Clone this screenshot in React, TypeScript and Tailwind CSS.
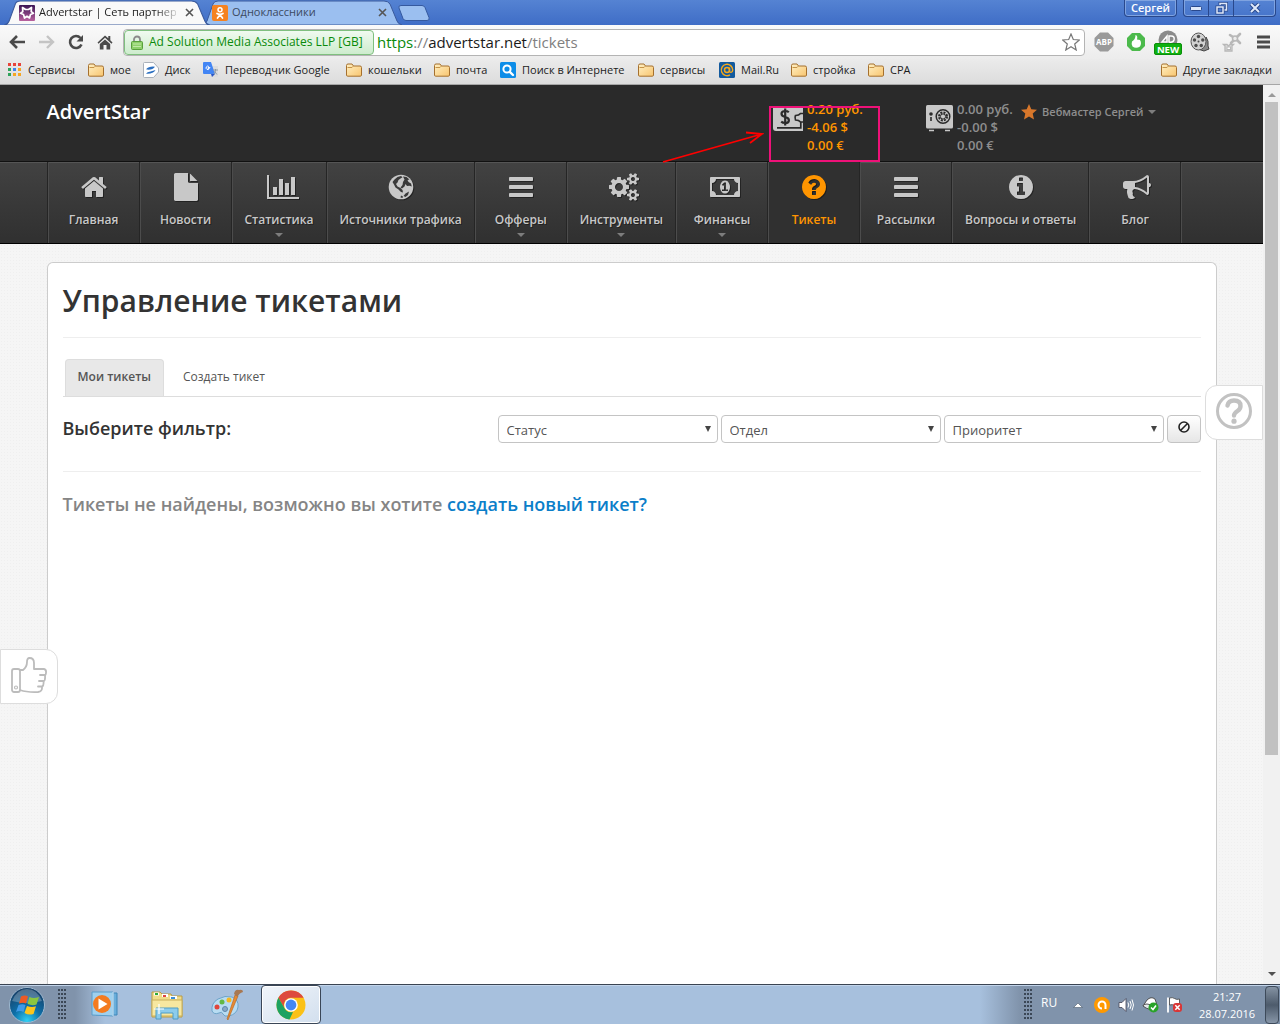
import React from 'react';

const CIRCLE =
  'm384 192q0 209-103 385.5t-279.5 279.5-385.5 103-385.5-103-279.5-279.5-103-385.5 103-385.5 279.500-279.500 385.500-103 385.500 103 279.500 279.500 103 385.500z';

const PATHS = {
  home: 'M1472 992v480q0 26-19 45t-45 19h-384v-384h-256v384h-384q-26 0-45-19t-19-45v-480q0-1 .5-3t.5-3l575-474 575 474q1 2 1 6zm223-69l-62 74q-8 9-21 11h-3q-13 0-21-7l-692-577-692 577q-12 8-24 7-13-2-21-11l-62-74q-8-10-7-23.500t11-21.500l719-599q32-26 76-26t76 26l244 204v-195q0-14 9-23t23-9h192q14 0 23 9t9 23v408l219 182q10 8 11 21.500t-7 23.500z',
  file: 'M1152 512v-472q22 14 36 28l408 408q14 14 28 36h-472zm-128 32q0 40 28 68t68 28h544v1056q0 40-28 68t-68 28h-1344q-40 0-68-28t-28-68v-1600q0-40 28-68t68-28h800v544z',
  chart: 'M640 896v512h-256v-512h256zm384-512v1024h-256v-1024h256zm1024 1152v128h-2048v-1536h128v1408h1920zm-640-896v768h-256v-768h256zm384-384v1152h-256v-1152h256z',
  bars: 'M1664 1344v128q0 26-19 45t-45 19h-1408q-26 0-45-19t-19-45v-128q0-26 19-45t45-19h1408q26 0 45 19t19 45zm0-512v128q0 26-19 45t-45 19h-1408q-26 0-45-19t-19-45v-128q0-26 19-45t45-19h1408q26 0 45 19t19 45zm0-512v128q0 26-19 45t-45 19h-1408q-26 0-45-19t-19-45v-128q0-26 19-45t45-19h1408q26 0 45 19t19 45z',
  cogs: 'M896 896q0-106-75-181t-181-75-181 75-75 181 75 181 181 75 181-75 75-181zm768 512q0-52-38-90t-90-38-90 38-38 90q0 53 37.500 90.500t90.500 37.500 90.500-37.500 37.500-90.500zm0-1024q0-52-38-90t-90-38-90 38-38 90q0 53 37.500 90.500t90.500 37.500 90.500-37.500 37.500-90.500zm-384 421v185q0 10-7 19.500t-16 10.500l-155 24q-11 35-32 76 34 48 90 115 7 11 7 20 0 12-7 19-23 30-82.500 89.500t-78.500 59.500q-11 0-21-7l-115-90q-37 19-77 31-11 108-23 155-7 24-30 24h-186q-11 0-20-7.500t-10-17.500l-23-153q-34-10-75-31l-118 89q-7 7-20 7-11 0-21-8-144-133-144-160 0-9 7-19 10-14 41-53t47-61q-23-44-35-82l-152-24q-10-1-17-9.500t-7-19.500v-185q0-10 7-19.500t16-10.500l155-24q11-35 32-76-34-48-90-115-7-11-7-20 0-12 7-20 22-30 82-89t79-59q11 0 21 7l115 90q34-18 77-32 11-108 23-154 7-24 30-24h186q11 0 20 7.500t10 17.500l23 153q34 10 75 31l118-89q8-7 20-7 11 0 21 8 144 133 144 160 0 8-7 19-12 16-42 54t-45 60q23 48 34 82l152 23q10 2 17 10.500t7 19.500zm640 533v140q0 16-149 31-12 27-30 52 51 113 51 138 0 4-4 7-122 71-124 71-8 0-46-47t-52-68q-20 2-30 2t-30-2q-14 21-52 68t-46 47q-2 0-124-71-4-3-4-7 0-25 51-138-18-25-30-52-149-15-149-31v-140q0-16 149-31 13-29 30-52-51-113-51-138 0-4 4-7 4-2 35-20t59-34 30-16q8 0 46 46.500t52 67.500q20-2 30-2t30 2q51-71 92-112l6-2q4 0 124 70 4 3 4 7 0 25-51 138 17 23 30 52 149 15 149 31zm0-1024v140q0 16-149 31-12 27-30 52 51 113 51 138 0 4-4 7-122 71-124 71-8 0-46-47t-52-68q-20 2-30 2t-30-2q-14 21-52 68t-46 47q-2 0-124-71-4-3-4-7 0-25 51-138-18-25-30-52-149-15-149-31v-140q0-16 149-31 13-29 30-52-51-113-51-138 0-4 4-7 4-2 35-20t59-34 30-16q8 0 46 46.500t52 67.500q20-2 30-2t30 2q51-71 92-112l6-2q4 0 124 70 4 3 4 7 0 25-51 138 17 23 30 52 149 15 149 31z',
  money: 'M768 1152h384v-96h-128v-448h-114l-148 137 77 80q42-37 55-57h2v288h-128v96zm512-256q0 70-21 142t-59.500 134-101.500 101-138 39-138-39-101.500-101-59.500-134-21-142 21-142 59.500-134 101.500-101 138-39 138 39 101.500 101 59.500 134 21 142zm512 256v-512q-106 0-181-75t-75-181h-1152q0 106-75 181t-181 75v512q106 0 181 75t75 181h1152q0-106 75-181t181-75zm128-832v1152q0 26-19 45t-45 19h-1792q-26 0-45-19t-19-45v-1152q0-26 19-45t45-19h1792q26 0 45 19t19 45z',
  question:
    'M1024 1376v-192q0-14-9-23t-23-9h-192q-14 0-23 9t-9 23v192q0 14 9 23t23 9h192q14 0 23-9t9-23zm256-672q0-88-55.500-163t-138.500-116-170-41q-243 0-371 213-15 24 8 42l132 100q7 6 19 6 16 0 25-12 53-68 86-92 34-24 86-24 48 0 85.500 26t37.500 59q0 38-20 61t-68 45q-63 28-115.500 86.500t-52.500 125.500v36q0 14 9 23t23 9h192q14 0 23-9t9-23q0-19 21.500-49.500t54.500-49.500q32-18 49-28.500t46-35 44.500-48 28-60.500 12.500-81z' +
    CIRCLE,
  info:
    'M1152 1376v-160q0-14-9-23t-23-9h-96v-512q0-14-9-23t-23-9h-320q-14 0-23 9t-9 23v160q0 14 9 23t23 9h96v320h-96q-14 0-23 9t-9 23v160q0 14 9 23t23 9h448q14 0 23-9t9-23zm-128-896v-160q0-14-9-23t-23-9h-192q-14 0-23 9t-9 23v160q0 14 9 23t23 9h192q14 0 23-9t9-23zm640 416q0 209-103 385.500t-279.500 279.500-385.500 103-385.500-103-279.500-279.500-103-385.500 103-385.500 279.500-279.500 385.500-103 385.500 103 279.500 279.500 103 385.500z',
  horn: 'M1664 640q53 0 90.500 37.500t37.500 90.500-37.500 90.500-90.500 37.500v384q0 52-38 90t-90 38q-417-347-812-380-58 19-91 66t-31 100.500 40 92.500q-20 33-23 65.500t6 58 33.500 55 48 50 61.500 50.500q-29 58-111.500 83t-168.500 11.500-132-55.500q-7-23-29.500-87.500t-32-94.500-23-89-15-101 3.500-98.500 22-110.500h-122q-66 0-113-47t-47-113v-192q0-66 47-113t113-47h480q435 0 896-384 52 0 90 38t38 90v384zm-128 604v-954q-394 302-768 343v270q377 42 768 341z',
};

function Glyph({ d, w = 1792 }: { d: string; w?: number }) {
  return (
    <svg viewBox={`0 0 ${w} 1792`} className="h-7 w-auto max-w-none shrink-0 drop-shadow-[1px_1px_0_rgba(0,0,0,0.4)]" fill="currentColor" fillRule="evenodd">
      <path d={d} />
    </svg>
  );
}

/* Wide glyphs start at the left edge of a 24px box and run past its right edge. */
function WideGlyph({ d, w }: { d: string; w?: number }) {
  return (
    <span className="flex w-6">
      <Glyph d={d} w={w} />
    </span>
  );
}

function Globe() {
  return (
    <svg viewBox="0 0 28 28" className="h-7 w-7 drop-shadow-[1px_1px_0_rgba(0,0,0,0.4)]">
      <circle cx="14" cy="14" r="12.300" fill="currentColor" />
      <path
        d="M7.500 6.500l3-2.500 3.500-1 1.500 1.200-2 1.300-2 1.500-1 2.500-1.500 1.500 1.500 2.500 3 1.500 2 2 .5 2.500-2-.5-2.500-2.500-3-2-1.500-3-1.500-2.500zM16 3.500l3.500.5 3 2.500-2 .5 1 2 2.500 1.500.8 3-2.300-.8-2.500.3-1.500-2-1 2.500-2.500 2-1.500-1 2-2.500.5-3 1.500-2.500zM18.500 20.500l3.500-2-1 3.500-2.500 2-2-1zM14 22.500l2 1-.5 1.500-2-.5z"
        fill="#3a3a3a"
      />
    </svg>
  );
}

function Folder() {
  return (
    <svg viewBox="0 0 16 14" className="h-[14px] w-4 shrink-0">
      <defs>
        <linearGradient id="folder" x1="0" y1="0" x2="1" y2="1">
          <stop offset="0" stopColor="#fff0c4" />
          <stop offset="1" stopColor="#f8c56f" />
        </linearGradient>
      </defs>
      <path d="M.5 12V2.500Q.5 1 2 1h4l1.500 2H14q1.500 0 1.500 1.500V12q0 1.200-1.200 1.200H1.700Q.5 13.200.5 12z" fill="url(#folder)" stroke="#a5702e" />
      <path d="M1.500 4.500H6L7.500 3" stroke="#c69448" fill="none" />
    </svg>
  );
}

function AppsIcon() {
  const c = ['#e8443a', '#e8443a', '#e8443a', '#2fa35a', '#3f83ee', '#f5a623', '#2fa35a', '#f5a623', '#f5a623'];
  return (
    <svg viewBox="0 0 14 14" className="h-[14px] w-[14px] shrink-0">
      {c.map((f, i) => (
        <rect key={i} x={(i % 3) * 5} y={Math.floor(i / 3) * 5} width="3" height="3" fill={f} />
      ))}
    </svg>
  );
}

function DiskIcon() {
  return (
    <svg viewBox="0 0 16 16" className="h-4 w-4 shrink-0">
      <path d="M.5 1.500q0-1 1-1h9l5 5.500v4l-5 5.500h-9q-1 0-1-1z" fill="#fff" stroke="#a9b0b9" />
      <path d="M3 7.300q3-3.300 9-2.600-2 2.800-6.500 3zM12.500 8q-2.500 4.300-9.500 3.700 1-2 4.500-2.300z" fill="#2b6fc0" />
    </svg>
  );
}

function TranslateIcon() {
  return (
    <svg viewBox="0 0 16 16" className="h-4 w-4 shrink-0">
      <path d="M5 4h10v11H8z" fill="#dcdcdc" />
      <path d="M0 1q0-1 1-1h7l4 12H1q-1 0-1-1z" fill="#4285f4" />
      <path d="M8 12h4l-3 3z" fill="#2a56c6" />
      <path d="M7.300 5.600H5v1h1.300A1.700 1.700 0 1 1 5.800 4.500" fill="none" stroke="#fff" strokeWidth="1" />
      <path d="M10 8h5M12.500 7v1q0 3-2 4M11.500 9.500l2.500 3" stroke="#8b98a5" fill="none" />
    </svg>
  );
}

function SearchIcon() {
  return (
    <svg viewBox="0 0 16 16" className="h-4 w-4 shrink-0">
      <rect width="16" height="16" rx="1.500" fill="#0d8de8" />
      <circle cx="7" cy="7" r="3.600" fill="none" stroke="#fff" strokeWidth="2" />
      <path d="M9.800 9.800 13 13" stroke="#fff" strokeWidth="2.400" strokeLinecap="round" />
    </svg>
  );
}

function MailRuIcon() {
  return (
    <svg viewBox="0 0 16 16" className="h-4 w-4 shrink-0">
      <rect width="16" height="16" rx="1.500" fill="#135a9e" />
      <circle cx="8" cy="8" r="2.500" fill="none" stroke="#f7a81b" strokeWidth="1.500" />
      <path d="M10.500 5.500V9q.2 1.500 1.500 1.400 1.700-.4 1.700-2.400A5.700 5.700 0 1 0 11 12.800" fill="none" stroke="#f7a81b" strokeWidth="1.400" />
    </svg>
  );
}

function StarFavicon() {
  return (
    <svg viewBox="0 0 16 16" className="h-4 w-4 shrink-0">
      <defs>
        <linearGradient id="fav" x1="0" y1="0" x2="0" y2="1">
          <stop offset="0" stopColor="#3b1554" />
          <stop offset="1" stopColor="#b9629f" />
        </linearGradient>
      </defs>
      <rect width="16" height="16" rx="1" fill="url(#fav)" />
      <path d="M3.500 2.500 6.500 4.500h3l3-2-.3 4 2.300 1.800-3 1.200-1 3.500L8 11.300 5.500 13l-1-3.500-3-1.200 2.300-1.800z" fill="none" stroke="#fff" strokeWidth="1.700" strokeLinejoin="round" />
    </svg>
  );
}

function OkFavicon() {
  return (
    <svg viewBox="0 0 16 16" className="h-4 w-4 shrink-0">
      <rect width="16" height="16" rx="2" fill="#f58220" />
      <circle cx="8" cy="4.800" r="2" fill="none" stroke="#fff" strokeWidth="1.500" />
      <path d="M5 8.500q3 1.800 6 0M8 9.800 5.500 13M8 9.800l2.500 3.200" fill="none" stroke="#fff" strokeWidth="1.700" strokeLinecap="round" />
    </svg>
  );
}

function Cross() {
  return (
    <svg viewBox="0 0 9 9" className="h-[9px] w-[9px]">
      <path d="M1 1l7 7M8 1 1 8" stroke="#555" strokeWidth="1.600" />
    </svg>
  );
}

function TabShape({ fill, stroke }: { fill: string; stroke: string }) {
  return (
    <svg viewBox="0 0 200 25" preserveAspectRatio="none" className="absolute inset-0 -z-10 h-full w-full">
      <path d="M0 25Q4 24 5 21L11 4Q12 1 16 1H182Q186 1 188 4L195 21Q196 24 200 25z" fill={fill} stroke={stroke} />
    </svg>
  );
}

function TabStrip() {
  return (
    <div className="flex h-[25px] shrink-0 items-start bg-gradient-to-b from-[#5583d3] to-[#3f6dc6] pl-1 text-[11px]">
      <div className="relative isolate z-10 flex h-[25px] w-[206px] items-center pl-[15px]">
        <TabShape fill="#f9f9f9" stroke="#3a5a9c" />
        <StarFavicon />
        <span className="ml-1 w-[137px] [mask-image:linear-gradient(to_right,black_85%,#0003)] whitespace-nowrap text-[#222]">Advertstar | Сеть партнер</span>
        <button aria-label="Закрыть вкладку" className="ml-[9px]"><Cross /></button>
      </div>
      <div className="relative isolate -ml-2 flex h-[25px] w-[200px] items-center pr-[15px] pl-[10px]">
        <TabShape fill="#9bbff0" stroke="#3a5a9c" />
        <OkFavicon />
        <span className="ml-1 flex-1 text-[#3c4a60]">Одноклассники</span>
        <button aria-label="Закрыть вкладку"><Cross /></button>
      </div>
      <button aria-label="Новая вкладка" className="mt-[5px] -ml-1">
        <svg viewBox="0 0 32 16" className="h-4 w-8">
          <path d="M3 .5h21q2 0 3 2l4 10q1 3-2 3H8q-2 0-3-2L1 3Q0 .5 3 .5z" fill="#9bbff0" stroke="#35599f" />
        </svg>
      </button>
      <button className="ml-auto h-[17px] w-[53px] rounded-b border border-t-0 border-[#29488c] text-center text-[11px] leading-4 font-semibold text-white shadow-[inset_0_0_0_1px_#7fa3e0]">Сергей</button>
      <div className="mr-1 ml-[6px] flex h-[17px] rounded-b border border-t-0 border-[#29488c] shadow-[inset_0_0_0_1px_#7fa3e0]">
        <button aria-label="Свернуть" className="flex w-[25px] items-center justify-center border-r border-[#29488c]">
          <svg viewBox="0 0 12 6" className="h-[6px] w-3"><rect x=".5" y="1.500" width="11" height="4" rx="1" fill="#dfe9fa" stroke="#29488c" /></svg>
        </button>
        <button aria-label="Восстановить" className="flex w-[25px] items-center justify-center border-r border-[#29488c]">
          <svg viewBox="0 0 13 13" className="h-[13px] w-[13px]" fill="none">
            <path d="M5 3V1.500h6.500V8H9" stroke="#29488c" strokeWidth="3" /><path d="M5 3V1.500h6.500V8H9" stroke="#dfe9fa" strokeWidth="1.500" />
            <rect x="2" y="5" width="6" height="6" stroke="#29488c" strokeWidth="3" /><rect x="2" y="5" width="6" height="6" stroke="#dfe9fa" strokeWidth="1.500" />
          </svg>
        </button>
        <button aria-label="Закрыть" className="flex w-[41px] items-center justify-center">
          <svg viewBox="0 0 12 10" className="h-[10px] w-3" fill="none">
            <path d="M2 1l8 8M10 1 2 9" stroke="#29488c" strokeWidth="4" /><path d="M2 1l8 8M10 1 2 9" stroke="#dfe9fa" strokeWidth="2" />
          </svg>
        </button>
      </div>
    </div>
  );
}

function Toolbar() {
  return (
    <div className="flex h-[34px] shrink-0 items-center bg-gradient-to-b from-[#fafafa] to-[#ececec] pr-[10px] pl-[9px]">
      <button aria-label="Назад" className="w-[30px]">
        <svg viewBox="0 0 16 14" className="h-[14px] w-4"><path d="M8 1 2 7l6 6M2 7h14" fill="none" stroke="#4a4a4a" strokeWidth="2.600" /></svg>
      </button>
      <button aria-label="Вперёд" className="w-[29px]">
        <svg viewBox="0 0 16 14" className="h-[14px] w-4"><path d="M8 1l6 6-6 6M14 7H0" fill="none" stroke="#c4c4c4" strokeWidth="2.400" /></svg>
      </button>
      <button aria-label="Обновить" className="w-[29px]">
        <svg viewBox="0 0 16 16" className="h-4 w-4"><path d="M13.500 10.500A6 6 0 1 1 12.500 4" fill="none" stroke="#4a4a4a" strokeWidth="2.600" /><path d="M15 1v6.500H8.500z" fill="#4a4a4a" /></svg>
      </button>
      <button aria-label="Домой" className="w-[26px]">
        <svg viewBox="0 0 16 16" className="h-4 w-4"><path d="M8 1.500 0.500 8.500l1 1.200L8 3.800l6.500 5.900 1-1.200-2.200-2.200V2h-2v2.300zM8 5.500 2.800 10v5.500h3.700V11h3v4.500h3.700V10z" fill="#4a4a4a" /></svg>
      </button>
      <div className="flex h-[27px] flex-1 items-center rounded-sm border border-[#b4b4b4] bg-white pr-1">
        <span className="flex h-[25px] w-[250px] items-center rounded-sm border border-[#7fbf7f] bg-gradient-to-b from-[#f0faf0] to-[#cdeccd] pl-[6px] text-[12px] whitespace-nowrap text-[#0a8a0a]">
          <svg viewBox="0 0 12 15" className="mr-[6px] h-[15px] w-3 shrink-0">
            <path d="M3 7V4.500a3 3 0 0 1 6 0V7" fill="none" stroke="#8b8b8b" strokeWidth="1.800" />
            <rect x=".5" y="6.500" width="11" height="8" rx="1" fill="#8ed06b" stroke="#58a03c" />
            <path d="M2 9h8M2 11.500h8" stroke="#c1eaa8" />
          </svg>
          Ad Solution Media Associates LLP [GB]
        </span>
        <span className="ml-[3px] flex-1 text-[15px] whitespace-nowrap text-[#808080]">
          <span className="text-[#0a8a0a]">https</span>://<span className="text-[#1a1a1a]">advertstar.net</span>/tickets
        </span>
        <svg viewBox="0 0 18 18" className="h-[18px] w-[18px]"><path d="M9 1l2.300 5.500 6 .5-4.600 4 1.500 6L9 13.800 3.800 17l1.500-6L.7 7l6-.5z" fill="#fff" stroke="#777" strokeWidth="1.200" /></svg>
      </div>
      <div className="ml-[9px] flex items-center">
        <span className="flex w-8">
          <svg viewBox="0 0 20 20" className="h-5 w-5"><path d="M6 .5h8l5.500 5.500v8L14 19.500H6L.5 14V6z" fill="#9a9a9a" /><text x="10" y="13.200" textAnchor="middle" fontSize="8" fontWeight="700" fontFamily="Open Sans, sans-serif" fill="#fff">ABP</text></svg>
        </span>
        <span className="flex w-7">
          <svg viewBox="0 0 20 20" className="h-5 w-5"><path d="M6 1h8l5 5v8l-5 5H6l-5-5V6z" fill="#4cba4c" /><path d="M6 9.500q3.500-2 3.500-6.500 2.500.5 1.500 4.500l3 .5q2 3 0 6.500-4 2.500-7.500 0-1.500-2.500-.5-5z" fill="#fff" /></svg>
        </span>
        <span className="flex w-9">
          <svg viewBox="0 0 28 26" className="h-[26px] w-7">
            <circle cx="14" cy="11" r="9.500" fill="#8b8b8b" /><path d="M8 13l5-6v6zM15 7h2q4 0 3 4-1 3-5 2z" fill="none" stroke="#fff" strokeWidth="1.500" />
            <rect x=".5" y="14.500" width="27" height="11" rx="1.500" fill="#10b010" stroke="#0a8f0a" /><text x="14" y="23.500" textAnchor="middle" fontSize="9.500" fontWeight="700" fontFamily="Open Sans, sans-serif" fill="#fff">NEW</text>
          </svg>
        </span>
        <span className="flex w-8">
          <svg viewBox="0 0 20 20" className="h-5 w-5">
            <path d="M8 17q7-2 8-12 3 4 2 9l1 3-5 2z" fill="#8a8a8a" stroke="#444" /><ellipse cx="8.500" cy="9.500" rx="7.500" ry="8.500" fill="#d2d2d2" stroke="#555" />
            <g fill="#4c4c4c"><circle cx="8.500" cy="4.500" r="1.700" /><circle cx="4.500" cy="8" r="1.700" /><circle cx="6" cy="13.500" r="1.700" /><circle cx="11.300" cy="13.500" r="1.700" /><circle cx="12.800" cy="8" r="1.700" /><circle cx="8.500" cy="9.500" r="1" /></g>
          </svg>
        </span>
        <span className="flex w-[35px]">
          <svg viewBox="0 0 20 20" className="h-5 w-5" fill="none" stroke="#b8b8b8"><path d="M8 3l3 2M18 2l-3 3M9 11l3-3M18 11l-3-3" strokeWidth="2.600" strokeLinecap="round" /><circle cx="13" cy="6.500" r="2.500" fill="#ececec" strokeWidth="1.500" /><path d="M1.500 12.500 3 14v5h7v-5l1.500-1.500H8L6.500 14 5 12.500z" fill="#ddd" strokeWidth="1.300" /><rect x="5" y="15" width="3.500" height="2.500" fill="#fff" /></svg>
        </span>
        <button aria-label="Меню">
          <svg viewBox="0 0 14 14" className="h-[14px] w-[13px]" preserveAspectRatio="none"><path d="M0 2h14M0 7h14M0 12h14" stroke="#4a4a4a" strokeWidth="3" /></svg>
        </button>
      </div>
    </div>
  );
}

const BOOKMARKS = [
  { label: 'Сервисы', icon: <AppsIcon />, w: 'w-[80px]' },
  { label: 'мое', icon: <Folder />, w: 'w-[55px]' },
  { label: 'Диск', icon: <DiskIcon />, w: 'w-[60px]' },
  { label: 'Переводчик Google', icon: <TranslateIcon />, w: 'w-[143px]' },
  { label: 'кошельки', icon: <Folder />, w: 'w-[88px]' },
  { label: 'почта', icon: <Folder />, w: 'w-[66px]' },
  { label: 'Поиск в Интернете', icon: <SearchIcon />, w: 'w-[138px]' },
  { label: 'сервисы', icon: <Folder />, w: 'w-[81px]' },
  { label: 'Mail.Ru', icon: <MailRuIcon />, w: 'w-[72px]' },
  { label: 'стройка', icon: <Folder />, w: 'w-[77px]' },
  { label: 'CPA', icon: <Folder />, w: 'w-[50px]' },
];

function Bookmarks() {
  return (
    <nav className="flex h-[26px] shrink-0 items-center border-b border-[#a6a6a6] bg-gradient-to-b from-[#ebebeb] to-[#dcdcdc] pr-2 pb-[3px] pl-2 text-[11px] text-[#1c1c1c]">
      {BOOKMARKS.map((b, i) => (
        <a key={i} href="#" className={`flex shrink-0 items-center gap-[6px] whitespace-nowrap ${b.w}`}>
          {b.icon}
          {b.label}
        </a>
      ))}
      <a href="#" className="ml-auto flex items-center gap-[6px] whitespace-nowrap"><Folder />Другие закладки</a>
    </nav>
  );
}

const MENU: { label: string; icon: React.ReactNode; drop?: boolean; active?: boolean }[] = [
  { label: 'Главная', icon: <Glyph d={PATHS.home} /> },
  { label: 'Новости', icon: <Glyph d={PATHS.file} /> },
  { label: 'Статистика', icon: <WideGlyph d={PATHS.chart} w={2048} />, drop: true },
  { label: 'Источники трафика', icon: <Globe /> },
  { label: 'Офферы', icon: <Glyph d={PATHS.bars} />, drop: true },
  { label: 'Инструменты', icon: <WideGlyph d={PATHS.cogs} w={1920} />, drop: true },
  { label: 'Финансы', icon: <WideGlyph d={PATHS.money} w={1920} />, drop: true },
  { label: 'Тикеты', icon: <Glyph d={PATHS.question} />, active: true },
  { label: 'Рассылки', icon: <Glyph d={PATHS.bars} /> },
  { label: 'Вопросы и ответы', icon: <Glyph d={PATHS.info} /> },
  { label: 'Блог', icon: <WideGlyph d={PATHS.horn} /> },
];

function Caret() {
  return (
    <svg viewBox="0 0 8 4" className="h-1 w-2"><path d="M0 0h8L4 4z" fill="#7d7d7d" /></svg>
  );
}

function WalletIcon() {
  return (
    <svg viewBox="0 0 30 27" className="h-[27px] w-[30px] shrink-0">
      <path d="M2 1h26q2 0 2 2v23H3q-3 0-3-3V3q0-2 2-2z" fill="#c8c8c8" />
      <path d="M30 8.500h-2.500Q26 10.500 22.500 10.500q-1 2 0 4.500 3.500 0 5 2H30M27.800 17v5.800H4" stroke="#2a2a2a" strokeWidth="1.700" fill="none" />
      <path d="M15.800 7.200Q14.500 6 12.200 6 8.500 6 8.500 8.800q0 2.300 3.700 3.200t3.700 3.200q0 2.800-3.700 2.800-2.500 0-4-1.300M12.200 3.500v17" stroke="#2a2a2a" strokeWidth="2.200" fill="none" />
    </svg>
  );
}

function SafeIcon() {
  return (
    <svg viewBox="0 0 27 27" className="h-[27px] w-[27px] shrink-0">
      <rect x="0" y="0" width="27" height="23.500" rx="1.500" fill="#c8c8c8" />
      <path d="M3 25.500h5M19 25.500h5" stroke="#c8c8c8" strokeWidth="1.500" />
      <g fill="none" stroke="#2a2a2a"><circle cx="17" cy="11.500" r="6.800" strokeWidth="1.500" /><circle cx="17" cy="11.500" r="4" strokeWidth="2" strokeDasharray="2 1.140" /><circle cx="17" cy="11.500" r="2.600" /></g>
      <circle cx="5" cy="9" r="1.800" fill="#2a2a2a" /><path d="M5 12v4" stroke="#2a2a2a" strokeWidth="1.600" />
    </svg>
  );
}

function Annotation() {
  return (
    <>
      <div className="pointer-events-none absolute top-[1px] -left-1 z-20 h-14 w-[111px] border-2 border-[#ee1178]" />
      <svg viewBox="0 0 102 32" className="pointer-events-none absolute top-[26px] -left-[111px] z-20 h-8 w-[102px]" fill="none" stroke="#f00" strokeWidth="1.800">
        <path d="M1 31 100 3M84 1.500 100 3 88 12" />
      </svg>
    </>
  );
}

function SiteHeader() {
  return (
    <header className="bg-[#2a2a2a]">
      <div className="mx-auto flex h-[76px] max-w-[1170px] pr-[61px]">
        <a href="#" className="mt-[13px] text-[20px] leading-7 font-semibold text-white">AdvertStar</a>
        <div className="relative mt-5 ml-auto flex w-[153px] gap-1 self-start text-[13px] leading-[18px] font-semibold text-[#ff9500]">
          <WalletIcon />
          <div className="-mt-[5px]">
            <p>0.20 руб.</p>
            <p>-4.06 $</p>
            <p>0.00 €</p>
          </div>
          <Annotation />
        </div>
        <div className="mt-5 flex w-[95px] gap-1 self-start text-[13px] leading-[18px] font-semibold whitespace-nowrap text-[#8e8e8e]">
          <SafeIcon />
          <div className="-mt-[5px]">
            <p>0.00 руб.</p>
            <p>-0.00 $</p>
            <p>0.00 €</p>
          </div>
        </div>
        <button className="mt-[18px] flex h-[18px] items-center text-[11px] font-semibold whitespace-nowrap text-[#8e8e8e]">
          <svg viewBox="0 0 16 16" className="mr-[5px] h-4 w-4"><path d="M8 0l2.300 5.300 5.700.5-4.300 3.800 1.300 5.900L8 12.400 3 15.500l1.300-5.900L0 5.800l5.700-.5z" fill="#d8772b" /></svg>
          Вебмастер Сергей
          <span className="ml-1"><Caret /></span>
        </button>
      </div>
      <nav className="border-t border-b border-t-[#111] border-b-black bg-gradient-to-b from-[#424242] to-[#303030] shadow-[inset_0_1px_0_#555]">
        <ul className="mx-auto flex h-[81px] max-w-[1170px] border-l border-[#252525]">
          {MENU.map((m) => (
            <li key={m.label}>
              <a
                href="#"
                className={
                  m.active
                    ? 'flex h-full min-w-[92px] flex-col items-center border-r border-l border-r-[#252525] border-l-[#4c4c4c] bg-[#303030] px-3 pt-[11px] text-[12px] font-semibold whitespace-nowrap text-[#ff9500]'
                    : 'flex h-full min-w-[92px] flex-col items-center border-r border-l border-r-[#252525] border-l-[#4c4c4c] px-3 pt-[11px] text-[12px] font-semibold whitespace-nowrap text-[#c8c8c8] [text-shadow:1px_1px_0_#222]'
                }
              >
                {m.icon}
                <span className="mt-[10px] leading-[18px]">{m.label}</span>
                {m.drop && <span className="mt-1"><Caret /></span>}
              </a>
            </li>
          ))}
          <li className="w-px bg-[#4c4c4c]" />
        </ul>
      </nav>
    </header>
  );
}

function Filter({ label }: { label: string }) {
  return (
    <div className="relative">
      <select aria-label={label} className="block h-7 w-[220px] appearance-none rounded border border-[#c4c4c4] bg-white px-2 pt-1 text-[13px] text-[#555]">
        <option>{label}</option>
      </select>
      <svg viewBox="0 0 6 6" className="pointer-events-none absolute top-[11px] right-[7px] h-[6px] w-[6px]"><path d="M0 0h6L3 6z" fill="#444" /></svg>
    </div>
  );
}

function Page() {
  return (
    <div className="flex min-h-0 flex-1 font-['Open_Sans',sans-serif]">
      <div className="relative flex min-w-0 flex-1 flex-col overflow-hidden bg-[#f5f5f5] bg-[radial-gradient(#efefef_1px,transparent_1px)] bg-[size:3px_3px]">
        <SiteHeader />
        <main className="mx-auto mt-[18px] w-full max-w-[1170px] flex-1 rounded-t-md border border-b-0 border-[#ccc] bg-white px-[15px]">
          <h1 className="pt-[18px] text-[30px] leading-10 font-semibold text-[#333]">Управление тикетами</h1>
          <hr className="mt-4 border-[#eee]" />
          <div className="mt-[21px] flex border-b border-[#ddd] pl-[2px] text-[12px]">
            <a href="#" className="rounded-t border border-b-0 border-[#ddd] bg-[#e8e8e8] px-3 pt-2 pb-[10px] leading-[18px] font-semibold text-[#555]">Мои тикеты</a>
            <a href="#" className="ml-[7px] px-3 pt-[9px] pb-[10px] leading-[18px] text-[#555]">Создать тикет</a>
          </div>
          <div className="mt-[18px] flex items-start">
            <h2 className="text-[18px] leading-[26px] font-semibold text-[#333]">Выберите фильтр:</h2>
            <div className="ml-auto flex gap-[3px]">
              <Filter label="Статус" />
              <Filter label="Отдел" />
              <Filter label="Приоритет" />
              <button aria-label="Сбросить" className="flex h-7 w-[34px] justify-center rounded border border-[#c4c4c4] bg-gradient-to-b from-white to-[#e6e6e6] pt-[5px]">
                <svg viewBox="0 0 12 12" className="h-3 w-3" fill="none" stroke="#222" strokeWidth="1.600"><circle cx="6" cy="6" r="5" /><path d="M9.500 2.500l-7 7" /></svg>
              </button>
            </div>
          </div>
          <hr className="mt-7 border-[#eee]" />
          <p className="mt-[18px] text-[18px] leading-7 font-semibold text-[#858585]">
            Тикеты не найдены, возможно вы хотите <a href="#" className="text-[#0b7ec9]">создать новый тикет?</a>
          </p>
        </main>
        <button aria-label="Помощь" className="absolute top-[300px] right-0 flex h-[55px] w-[58px] items-center justify-center rounded-l-xl border border-[#ddd] bg-white pb-[3px]">
          <svg viewBox="0 0 36 36" className="h-9 w-9" fill="none" stroke="#c2c2c2"><circle cx="18" cy="18" r="16.500" strokeWidth="3" /><path d="M11.500 12.500q1-5 6.500-5 6.500 0 6.500 5.500 0 3-3 5-3.500 2.500-3.500 4.500" strokeWidth="4.400" strokeLinecap="round" /><circle cx="18" cy="28.200" r="2.600" fill="#c2c2c2" stroke="none" /></svg>
        </button>
        <button aria-label="Нравится" className="absolute top-[564px] left-0 flex h-[55px] w-[58px] items-center justify-center rounded-r-xl border border-[#ddd] bg-white pb-[3px]">
          <svg viewBox="0 0 36 36" className="h-9 w-9" fill="none" stroke="#bcbcbc" strokeWidth="1.800" strokeLinejoin="round" strokeLinecap="round">
            <rect x="1" y="12" width="8" height="23" rx="2" /><circle cx="5" cy="30.500" r="1.500" strokeWidth="1.200" />
            <path d="M9 13h3q4-3 4-8 0-4 2.500-4 4.500 0 4.500 5v6h10q2.500.5 2 4-.2 2-1 2.500.5 5-1.500 6 .5 4-1.500 5.500.5 4.500-4 5-11 .5-18-2M34 18h-5M32.500 24H28M31 29.500h-4" />
          </svg>
        </button>
      </div>
      <div className="flex w-[17px] shrink-0 flex-col items-center bg-[#f1f1f1]">
        <svg viewBox="0 0 8 4" className="mt-2 mb-[5px] h-1 w-2 shrink-0"><path d="M0 4h8L4 0z" fill="#9a9a9a" /></svg>
        <div className="min-h-0 w-[13px] flex-[652] bg-[#c1c1c1]" />
        <div className="min-h-0 flex-[217]" />
        <svg viewBox="0 0 8 4" className="mb-2 h-1 w-2 shrink-0"><path d="M0 0h8L4 4z" fill="#505050" /></svg>
      </div>
    </div>
  );
}

function Grip() {
  return <span className="h-[31px] w-2 shrink-0 bg-[radial-gradient(circle_at_1px_1px,#3b4756_1px,transparent_1px)] bg-[size:3px_4px]" />;
}

function Taskbar() {
  return (
    <footer className="flex h-10 shrink-0 items-center border-t border-[#3a4452] bg-[linear-gradient(to_right,#8093ab_0,#8093ab_75px,#a7c0dd_105px,#a7c0dd_calc(100%-300px),#8093ab_calc(100%-260px),#8093ab_100%)] pl-[9px] text-[11px] text-white shadow-[inset_0_1px_0_#c2d4ea]">
      <button aria-label="Пуск" className="w-[49px]">
        <svg viewBox="0 0 36 36" className="h-9 w-9">
          <defs>
            <radialGradient id="orb" cx=".5" cy=".95" r=".9"><stop offset="0" stopColor="#2fd0f5" /><stop offset=".45" stopColor="#0e6fa8" /><stop offset="1" stopColor="#173f66" /></radialGradient>
          </defs>
          <circle cx="18" cy="18" r="17.500" fill="url(#orb)" stroke="#9fb8cf" />
          <path d="M3 14Q8 2 18 2t15 12q-15 4-30 0z" fill="#fff" opacity=".25" />
          <path d="M12 9.500q4-2 7 0l-2 7q-3-1.500-7 0z" fill="#ee5a24" /><path d="M20.500 10q4 1.800 9.500 0l-2.500 7.500q-4 1.500-9-.5z" fill="#8cc63f" />
          <path d="M9.500 18q4-1.500 7 0l-2 7q-4-2-7.500 0z" fill="#3f9ae8" /><path d="M18 19q5 1.800 9 .2L24.500 27q-5 1.500-9-1z" fill="#fcc51c" />
        </svg>
      </button>
      <Grip />
      <button aria-label="Проигрыватель" className="ml-[25px] w-[59px]">
        <svg viewBox="0 0 30 30" className="h-[30px] w-[30px]">
          <path d="M5 3h21v22H5z" fill="#6aaedb" stroke="#3f86b8" /><path d="M1 2h21v24L1 25z" fill="#9fd0ee" stroke="#5a9cc9" /><path d="M22 2v24" stroke="#d5ecfa" />
          <circle cx="11" cy="14" r="9" fill="#f47b20" /><path d="M7.500 8.500v11l9-5.500z" fill="#fff" />
        </svg>
      </button>
      <button aria-label="Проводник" className="w-[61px]">
        <svg viewBox="0 0 34 30" className="h-[30px] w-[34px]">
          <path d="M2 5V2h8l2 2h9l1 2h10v21H2z" fill="#f0dc8a" stroke="#b89b45" /><path d="M4 2.500h5v3H4z" fill="#fff" /><path d="M5 3h3v2H5z" fill="#2daa3a" /><path d="M12 4h6v3h-6z" fill="#fff" /><path d="M13 5h3v2h-3z" fill="#d44" /><path d="M20 6h7v3h-7z" fill="#fff" /><path d="M21 7h4v2h-4z" fill="#3a8fd8" />
          <path d="M2 10h30v16H2z" fill="#f7e7a0" stroke="#c9ae58" /><path d="M6 18h22v11h-5v-6H11v6H6z" fill="#8cccec" stroke="#4f9cc4" /><path d="M9 14v10M4 19h10" stroke="#fff" strokeWidth="1.200" />
        </svg>
      </button>
      <button aria-label="Paint" className="w-[50px]">
        <svg viewBox="0 0 32 32" className="h-8 w-8">
          <path d="M1 22q-1-8 6-12t14-2q7 3 6 10t-9 9q-5 1-6-2t-4-1q-5 2-7-2z" fill="#b8dcf2" stroke="#6da4c9" />
          <circle cx="6" cy="18" r="2.500" fill="#e0453a" /><circle cx="11" cy="13" r="2.500" fill="#62b946" /><circle cx="18" cy="11" r="2.500" fill="#f5b921" /><circle cx="14" cy="20" r="2.500" fill="#88a9c9" stroke="#5b87ad" />
          <path d="M27 7 17 31l-1-1 8-24z" fill="#e78a33" stroke="#b5651d" strokeWidth=".6" /><path d="M23 5q1-5 5-4 4-1 4 2-4 1-5.500 5z" fill="#a87852" />
        </svg>
      </button>
      <button aria-label="Google Chrome" className="flex h-[39px] w-[60px] items-center justify-center rounded-sm border border-[#3a4657] bg-gradient-to-br from-[#f1f5fa] to-[#d2dfee] shadow-[inset_0_0_0_1px_white]">
        <svg viewBox="0 0 30 30" className="h-[30px] w-[30px]">
          <circle cx="15" cy="15" r="14.500" fill="#fbc116" />
          <path d="M2.400 7.800A14.500 14.500 0 0 1 27.600 7.800H15A7.300 7.300 0 0 0 8.700 18.600z" fill="#dd4b3e" />
          <path d="M2.400 7.800 8.700 18.600A7.300 7.300 0 0 0 17 22L13.500 29.500A14.500 14.500 0 0 1 2.400 7.800z" fill="#1da261" />
          <circle cx="15" cy="15" r="6.800" fill="#fff" /><circle cx="15" cy="15" r="5.400" fill="#4587f3" />
        </svg>
      </button>
      <span className="ml-auto flex"><Grip /></span>
      <span className="ml-[9px] w-8 pb-1 text-[12px]">RU</span>
      <svg viewBox="0 0 10 6" className="mr-[11px] h-[6px] w-[10px]"><path d="M.5 5.500 5 1l4.500 4.500z" fill="#fff" stroke="#4a5a6c" strokeWidth=".6" /></svg>
      <svg viewBox="0 0 16 16" className="mr-2 h-4 w-4"><circle cx="8" cy="8" r="8" fill="#f90" /><path d="M11.500 12V8A3.500 3.500 0 1 0 8 11.500" fill="none" stroke="#fff" strokeWidth="2" /></svg>
      <svg viewBox="0 0 16 16" className="mr-2 h-4 w-4"><path d="M1 5.500h3L8 1.500v13l-4-4H1z" fill="#fff" stroke="#445" strokeWidth=".8" /><path d="M10 5.500q1.500 2.500 0 5M12 4q2.500 4 0 8M14 2.500q3 5.500 0 11" stroke="#fff" fill="none" /></svg>
      <svg viewBox="0 0 17 17" className="mr-[7px] h-[17px] w-[17px]"><path d="M5 4q4-4 8-1l2 6q-5 3-14 1z" fill="#fff" stroke="#444" strokeWidth=".9" /><path d="M1 10q0-2 4-2l10 2v3q-8 2-14-3z" fill="#e5e9ed" stroke="#444" strokeWidth=".9" /><circle cx="11.500" cy="11.500" r="5" fill="#29a329" /><path d="M9 11.500l2 2 3-4" stroke="#fff" strokeWidth="1.500" fill="none" /></svg>
      <svg viewBox="0 0 17 17" className="mr-4 h-[17px] w-[17px]"><path d="M2 1.500v15" stroke="#fff" strokeWidth="1.800" /><path d="M3.500 2q3-1 5 .5t5 .5v7q-3 1-5-.5t-5-.5z" fill="#fff" stroke="#444" strokeWidth=".8" /><rect x="7" y="7" width="9" height="9" rx="3" fill="#d93636" /><path d="M9.300 9.300l4.400 4.400M13.700 9.300l-4.400 4.400" stroke="#fff" strokeWidth="1.500" /></svg>
      <div className="w-14 text-center leading-[17px] whitespace-nowrap">
        <p>21:27</p>
        <p>28.07.2016</p>
      </div>
      <button aria-label="Показать рабочий стол" className="mr-px ml-[10px] h-[38px] w-[14px] rounded-sm border border-[#3d4a5a] bg-gradient-to-b from-[#8593a3] via-[#4d5b6c] to-[#8796a8]" />
    </footer>
  );
}

export default function App() {
  return (
    <div className="flex h-screen min-h-[600px] flex-col overflow-hidden font-['Open_Sans',sans-serif]">
      <TabStrip />
      <Toolbar />
      <Bookmarks />
      <Page />
      <Taskbar />
    </div>
  );
}
